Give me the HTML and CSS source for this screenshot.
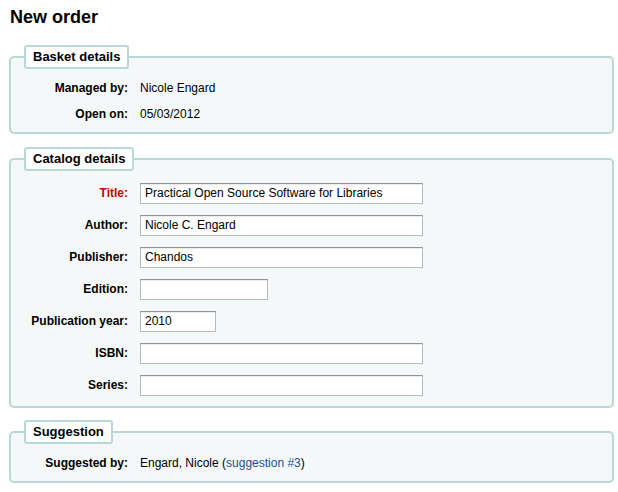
FILE: index.html
```html
<!DOCTYPE html>
<html>
<head>
<meta charset="utf-8">
<link rel="stylesheet" href="styles.css">
</head>
<body>
<h1 class="title">New order</h1>

<fieldset class="box box-basket">
  <legend class="box-legend">Basket details</legend>
  <div class="rows rows-text">
    <div class="row"><span class="label">Managed by:</span><span class="value">Nicole Engard</span></div>
    <div class="row"><span class="label">Open on:</span><span class="value">05/03/2012</span></div>
  </div>
</fieldset>

<fieldset class="box box-catalog">
  <legend class="box-legend">Catalog details</legend>
  <div class="rows rows-inputs">
    <div class="row"><label class="label required">Title:</label><input class="field field-long" type="text" value="Practical Open Source Software for Libraries"></div>
    <div class="row"><label class="label">Author:</label><input class="field field-long" type="text" value="Nicole C. Engard"></div>
    <div class="row"><label class="label">Publisher:</label><input class="field field-long" type="text" value="Chandos"></div>
    <div class="row"><label class="label">Edition:</label><input class="field field-mid" type="text" value=""></div>
    <div class="row"><label class="label">Publication year:</label><input class="field field-short" type="text" value="2010"></div>
    <div class="row"><label class="label">ISBN:</label><input class="field field-long" type="text" value=""></div>
    <div class="row"><label class="label">Series:</label><input class="field field-long" type="text" value=""></div>
  </div>
</fieldset>

<fieldset class="box box-suggestion">
  <legend class="box-legend">Suggestion</legend>
  <div class="rows rows-text">
    <div class="row"><span class="label">Suggested by:</span><span class="value">Engard, Nicole (<a class="link" href="#">suggestion #3</a>)</span></div>
  </div>
</fieldset>
</body>
</html>
```

FILE: styles.css
```css
html, body {
  margin: 0;
  background: #fff;
}
body {
  padding: 6px 4px 0 9px;
  font-family: "Liberation Sans", Arial, Helvetica, sans-serif;
  font-size: 12px;
  color: #000;
}
.title {
  margin: 0 0 17px 1px;
  font-size: 18px;
  line-height: 22px;
  font-weight: bold;
}
.box {
  margin: 0 0 12px 0;
  padding: 0 0 5px 0;
  border: 2px solid #b9d8d9;
  border-radius: 5px;
  background: #f4f8f9;
  min-width: 0;
}
.box-basket { margin-bottom: 13px; }
.box-legend {
  margin-left: 13px;
  padding: 2px 7px;
  border: 2px solid #b9d8d9;
  border-radius: 3px;
  background: #fff;
  font-size: 13px;
  font-weight: bold;
  line-height: 16px;
}
.rows {
  display: flex;
  flex-direction: column;
  padding-top: 6px;
}
.rows-text .row {
  display: flex;
  align-items: center;
  height: 26px;
  line-height: 14px;
}
.rows-inputs .row {
  display: flex;
  align-items: center;
  height: 32px;
}
.label {
  width: 117px;
  margin-right: 12px;
  text-align: right;
  font-weight: bold;
  flex: none;
}
.required { color: #c00; }
.value { white-space: nowrap; }
.link { color: #1b4f95; text-decoration: none; }
.field {
  box-sizing: border-box;
  height: 21px;
  margin: 0;
  padding: 0 4px;
  border: 1px solid #b8b8b8;
  border-top-color: #929292;
  background: #fff;
  font-family: "Liberation Sans", Arial, Helvetica, sans-serif;
  font-size: 12px;
  color: #000;
  box-shadow: inset 0 1px 0 #ececec;
}
.field-long { width: 283px; }
.field-mid { width: 128px; }
.field-short { width: 76px; }
```
